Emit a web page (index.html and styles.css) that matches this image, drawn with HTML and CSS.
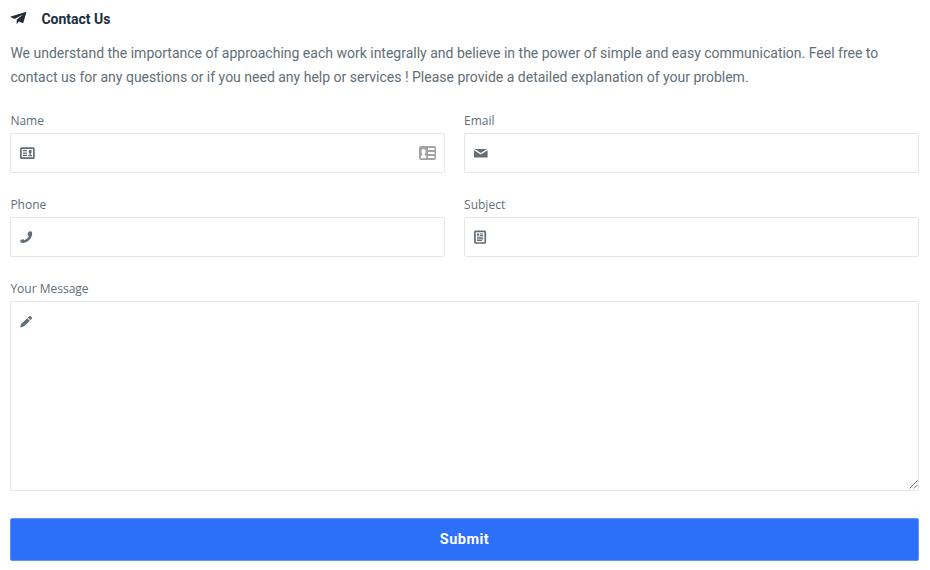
FILE: index.html
```html
<!DOCTYPE html>
<html lang="en">
<head>
    <meta charset="UTF-8">
    <meta name="viewport" content="width=device-width, initial-scale=1.0">
    <title>Contact Us</title>
    <link rel="stylesheet" href="styles.css">
</head>
<body>
<div class="contact">
    <div class="heading">
        <svg class="plane" viewBox="0 0 17 14">
            <path d="M16.500.800 0 5.800l4.600 2.100 8.400-4.500-6.300 5.400v4.400l2.200-2.700 4.300 1.800z"/>
        </svg>
        <h1>Contact Us</h1>
    </div>
    <p class="intro">We understand the importance of approaching each work integrally and believe in the power of simple and easy communication. Feel free to<br>contact us for any questions or if you need any help or services ! Please provide a detailed explanation of your problem.</p>

    <form class="form">
        <div class="field">
            <label for="name">Name</label>
            <div class="control">
                <svg class="icon" viewBox="0 0 16 16">
                    <rect x="1.900" y="3.200" width="13" height="10" rx=".8" fill="none" stroke="currentColor" stroke-width="1.700"/>
                    <path d="M4 5h4v1.300H4zM4 7.400h4v1.300H4zM4 9.800h4v1.300H4zM9.300 10h1.200V8.200h-.7V5h2.700v3.200h-.7V10H13v1.200H9.300z"/>
                </svg>
                <input type="text" id="name">
                <svg class="autofill" viewBox="0 0 17 14">
                    <path fill-rule="evenodd" d="M2 0h13q2 0 2 2v10q0 2-2 2H2q-2 0-2-2V2Q0 0 2 0zM1.800 12.200h5.400V10l-1.500-1V7.800q.9-.8.900-2.600Q6.600 3 4.500 3T2.400 5.200q0 1.800.9 2.600V9L1.800 10zM9 2h6.500v2H9zM9 6h6.500v2H9zM9 10h6.500v2H9z"/>
                </svg>
            </div>
        </div>
        <div class="field">
            <label for="email">Email</label>
            <div class="control">
                <svg class="icon" viewBox="0 0 16 16">
                    <path d="M1.500 4h12.600L7.800 8zM1 5.200l6.800 4.200 6.800-4.200v7.300H1z"/>
                </svg>
                <input type="email" id="email">
            </div>
        </div>
        <div class="field">
            <label for="phone">Phone</label>
            <div class="control">
                <svg class="icon" viewBox="0 0 16 16">
                    <path d="M10.500 2.500c1.800-.6 2.700.2 2.700 2 0 4.600-4.300 9-9 9.400-1.700.1-2.900-.3-3-1.300-.1-1.200.6-1.900 1.700-2.200 1.300-.4 2 0 2.500.9C7.300 10.500 9.200 8.900 9.800 7 8.800 6.500 8.500 5.800 8.800 4.600c.3-1.100.8-1.800 1.700-2.100z"/>
                </svg>
                <input type="tel" id="phone">
            </div>
        </div>
        <div class="field">
            <label for="subject">Subject</label>
            <div class="control">
                <svg class="icon" viewBox="0 0 16 16">
                    <rect x="1.900" y="2.300" width="10.400" height="11.700" rx=".7" fill="none" stroke="currentColor" stroke-width="1.700"/>
                    <path d="M4 4.500h2v2.300H4zM6.700 4.500h3.500v1H6.700zM6.700 6.100h3.500v1H6.700zM4 7.700h6.200v1.100H4zM4 9.300h6.200v1.100H4zM4 10.900h5v1H4z"/>
                </svg>
                <input type="text" id="subject">
            </div>
        </div>
        <div class="field wide">
            <label for="message">Your Message</label>
            <div class="control area">
                <svg class="icon" viewBox="0 0 16 16">
                    <path d="M8.900 3.600 10.300 2.300q.8-.7 1.700.1l.7.700q.7.900 0 1.700L11.400 6.200zM8.300 4.200l2.600 2.700-6.300 5.600L1.200 13.500l.8-3.500z"/>
                </svg>
                <textarea id="message"></textarea>
                <svg class="grip" viewBox="0 0 9 9">
                    <path d="M.5 8.500l8-8M4.800 8.500l3.700-3.700"/>
                </svg>
            </div>
        </div>
        <button class="submit" type="button">Submit</button>
    </form>
</div>
</body>
</html>
```
FILE: styles.css
```css
:root {
    --heading: #1f2d38;
    --text: #626e77;
    --border: #e6e6e6;
    --primary: #2c6ff8;
}

* {
    margin: 0;
    padding: 0;
    box-sizing: border-box;
}

body {
    font-family: Roboto, sans-serif;
    color: var(--text);
    background: #fff;
}

.contact {
    width: 908.2px;
    margin-left: 10.4px;
    padding-top: 8px;
}

.heading {
    display: flex;
    align-items: center;
    height: 21px;
    gap: 14px;
    color: var(--heading);
}

.heading h1 {
    font-size: 14px;
    font-weight: 700;
}

.plane {
    width: 17px;
    height: 14px;
    margin-top: -2px;
    fill: currentColor;
}

.intro {
    margin-top: 12px;
    font-size: 14px;
    line-height: 24px;
    white-space: nowrap;
}

.form {
    display: grid;
    grid-template-columns: 434.2px 454.5px;
    column-gap: 19.5px;
    row-gap: 23px;
    margin-top: 23px;
}

.field label {
    display: block;
    height: 21px;
    font-family: "Open Sans", sans-serif;
    font-size: 12px;
    line-height: 17px;
}

.wide,
.submit {
    grid-column: 1 / -1;
}

.control {
    display: flex;
    align-items: center;
    height: 40px;
    padding: 0 8px;
    border: 1px solid var(--border);
    border-radius: 2px;
    position: relative;
}

.area {
    height: 190px;
    align-items: flex-start;
    padding-top: 12px;
}

.icon {
    flex: none;
    width: 16px;
    height: 16px;
    fill: currentColor;
}

.autofill {
    flex: none;
    width: 17px;
    height: 14px;
    margin-top: -1px;
    fill: #a3a3a3;
}

input,
textarea {
    flex: 1;
    min-width: 0;
    padding: 0 10px;
    border: 0;
    outline: 0;
    background: none;
    font: 14px Roboto, sans-serif;
}

textarea {
    height: 100%;
    resize: none;
}

.grip {
    position: absolute;
    right: 0;
    bottom: 1px;
    width: 9px;
    height: 9px;
    fill: none;
    stroke: #777;
}

.submit {
    height: 43px;
    margin-top: 4px;
    border: 1px solid #5f93fb;
    border-radius: 2px;
    background: var(--primary);
    color: #fff;
    font: 700 14.5px Roboto, sans-serif;
    letter-spacing: 0.5px;
}
```
